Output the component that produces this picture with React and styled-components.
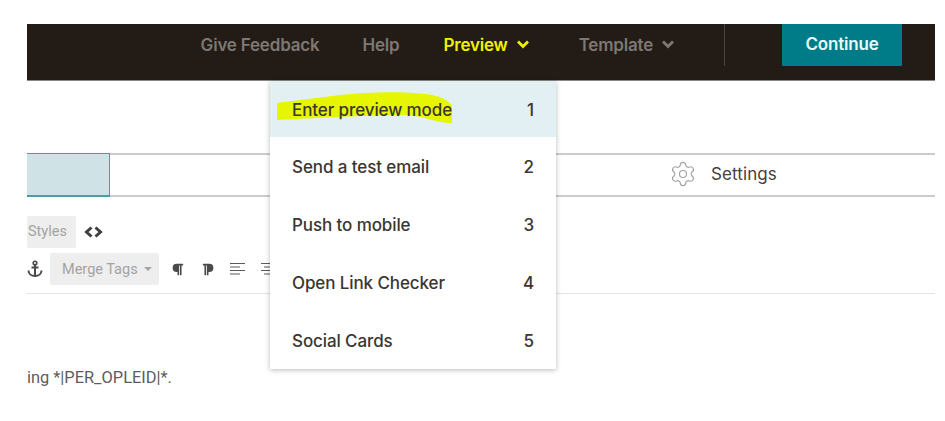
import React from "react";
import styled, { createGlobalStyle } from "styled-components";
import { Settings as GearIcon } from "lucide-react";
import { FaParagraph } from "react-icons/fa";

const GlobalStyle = createGlobalStyle`
  html, body {
    margin: 0;
    padding: 0;
    background: #fff;
  }
  body {
    font-family: "Inter", "Liberation Sans", sans-serif;
  }
`;

const Page = styled.div`
  position: relative;
  width: 945px;
  height: 421px;
  box-sizing: border-box;
  padding: 24px 10px 0 27px;
  overflow: hidden;
`;

const TopBar = styled.header`
  display: flex;
  justify-content: flex-end;
  align-items: flex-start;
  height: 56px;
  padding-right: 33px;
  background: #231b16;
  border-bottom: 1px solid #8a8886;
`;

const NavLink = styled.span`
  display: flex;
  align-items: center;
  height: 41px;
  margin-right: ${(p) => p.$gap}px;
  font-size: 17px;
  font-weight: 600;
  letter-spacing: -0.2px;
  color: ${(p) => (p.$active ? "#f2f200" : "#7d7874")};
`;

const Chevron = styled.svg`
  width: 14px;
  height: 9px;
  margin-left: ${(p) => p.$gap}px;
  fill: none;
  stroke: currentColor;
  stroke-width: 2.8;
`;

const Divider = styled.span`
  width: 1px;
  height: 42px;
  margin-right: 57px;
  background: #4a4541;
`;

const ContinueButton = styled.button`
  width: 120px;
  height: 42px;
  padding: 0 0 2px;
  border: 0;
  border-radius: 0 0 1px 1px;
  background: #007c89;
  color: #e8fbfb;
  font-family: inherit;
  font-size: 17px;
  font-weight: 600;
  letter-spacing: -0.2px;
`;

const TabRow = styled.div`
  display: flex;
  align-items: stretch;
  height: 40px;
  margin-top: 72px;
  border-top: 2px solid #cccccc;
  border-bottom: 2px solid #cccccc;
`;

const ActiveTab = styled.div`
  width: 82px;
  margin: -2px 0;
  background: #cfe3e6;
  border: solid #4f9ba3;
  border-width: 1px 1px 2px 0;
`;

const SettingsTab = styled.div`
  display: flex;
  align-items: center;
  margin-left: 559px;
  padding-bottom: 2px;
  gap: 14px;
  font-size: 17px;
  letter-spacing: 0.1px;
  color: #45403c;
  svg {
    color: #a3a3a3;
  }
`;

const ToolRow = styled.div`
  display: flex;
  align-items: center;
  height: 32px;
  margin-top: ${(p) => p.$top}px;
`;

const ToolButton = styled.div`
  display: flex;
  align-items: center;
  box-sizing: border-box;
  width: ${(p) => p.$width}px;
  height: 32px;
  margin-left: ${(p) => p.$left}px;
  padding-left: ${(p) => p.$pad}px;
  padding-bottom: ${(p) => p.$lift || 0}px;
  background: #eeeeee;
  border-radius: 2px;
  font-family: "Roboto", "Liberation Sans", sans-serif;
  font-size: 14.5px;
  color: #a3a3a3;
`;

const Caret = styled.span`
  margin-left: 6px;
  border-top: 4px solid #a3a3a3;
  border-left: 4px solid transparent;
  border-right: 4px solid transparent;
`;

const ToolIcon = styled.span`
  display: flex;
  align-items: center;
  margin-left: ${(p) => p.$left}px;
  color: #4a4a4a;
`;

const MirroredIcon = styled(ToolIcon)`
  svg {
    transform: scaleX(-1);
  }
`;

const EditorRule = styled.div`
  height: 1px;
  margin-top: 8px;
  background: #e4e4e4;
`;

const BodyText = styled.p`
  margin: 75px 0 0;
  font-family: "Roboto", "Liberation Sans", sans-serif;
  font-size: 16.4px;
  line-height: 18px;
  color: #5c5c5c;
`;

const Menu = styled.ul`
  position: absolute;
  top: 81px;
  left: 270px;
  width: 286px;
  margin: 0;
  padding: 0;
  list-style: none;
  background: #fff;
  box-shadow: 0 1px 5px rgba(0, 0, 0, 0.28);
`;

const MenuItem = styled.li`
  position: relative;
  display: flex;
  justify-content: space-between;
  align-items: center;
  height: ${(p) => (p.$selected ? 56 : 58)}px;
  box-sizing: border-box;
  padding: 2px 22px 0;
  background: ${(p) => (p.$selected ? "#e3f0f3" : "transparent")};
  font-size: 17px;
  font-weight: 450;
  letter-spacing: -0.1px;
  color: #3a3632;
`;

const MenuLabel = styled.span`
  position: relative;
`;

const Highlight = styled.svg`
  position: absolute;
  top: 11px;
  left: 6px;
  width: 177px;
  height: 32px;
`;

const items = ["Enter preview mode", "Send a test email", "Push to mobile", "Open Link Checker", "Social Cards"];

const ChevronDown = ({ gap }) => (
  <Chevron $gap={gap} viewBox="0 0 14 9">
    <path d="M2 1.5l5 5 5-5" />
  </Chevron>
);

const AlignLines = ({ center }) => (
  <svg width="16" height="14" viewBox="0 0 16 14" stroke="#5a5a5a" strokeWidth="1.2">
    <path d={center ? "M0 1.5h15M3 5h9M0 8.5h15M3 12h9" : "M0 1.5h15M0 5h10M0 8.5h15M0 12h10"} />
  </svg>
);

const AnchorIcon = () => (
  <svg width="16" height="18" viewBox="0 0 16 18" fill="none" stroke="#4a4a4a" strokeWidth="2">
    <circle cx="8" cy="3" r="1.8" strokeWidth="1.6" />
    <path d="M8 5v11M4.5 7.5h7M1.5 10.5c0 3.5 3 5.5 6.5 5.5s6.5-2 6.5-5.5" />
  </svg>
);

const App = () => {
  return (
    <Page>
      <GlobalStyle />
      <TopBar>
        <NavLink $gap={43}>Give Feedback</NavLink>
        <NavLink $gap={44}>Help</NavLink>
        <NavLink $gap={49} $active>
          Preview
          <ChevronDown gap={8} />
        </NavLink>
        <NavLink $gap={49}>
          Template
          <ChevronDown gap={8} />
        </NavLink>
        <Divider />
        <ContinueButton>Continue</ContinueButton>
      </TopBar>

      <TabRow>
        <ActiveTab />
        <SettingsTab>
          <GearIcon size={28} strokeWidth={1} />
          Settings
        </SettingsTab>
      </TabRow>

      <ToolRow $top={19}>
        <ToolButton $width={49} $left={0} $pad={1} $lift={2}>
          Styles
        </ToolButton>
        <ToolIcon $left={8}>
          <svg width="19" height="12" viewBox="0 0 19 12" fill="none" stroke="#3f3f3f" strokeWidth="3">
            <path d="M7.5 1.5L2.5 6l5 4.5M11.5 1.5l5 4.5-5 4.5" />
          </svg>
        </ToolIcon>
      </ToolRow>

      <ToolRow $top={5}>
        <ToolIcon $left={0}>
          <AnchorIcon />
        </ToolIcon>
        <ToolButton $width={109} $left={7} $pad={12}>
          Merge Tags
          <Caret />
        </ToolButton>
        <ToolIcon $left={12}>
          <FaParagraph size={13} />
        </ToolIcon>
        <MirroredIcon $left={18}>
          <FaParagraph size={13} />
        </MirroredIcon>
        <ToolIcon $left={15}>
          <AlignLines />
        </ToolIcon>
        <ToolIcon $left={15}>
          <AlignLines center />
        </ToolIcon>
      </ToolRow>

      <EditorRule />
      <BodyText>ing *|PER_OPLEID|*.</BodyText>

      <Menu>
        {items.map((label, i) => (
          <MenuItem key={label} $selected={i === 0}>
            {i === 0 && (
              <Highlight viewBox="0 0 177 32">
                <path
                  d="M1 11C20 8 45 6 64 3C90 0 125 -1 150 2C165 4 172 8 176 14L176 31C160 31 148 24 131 23C95 23 40 26 1 28Z"
                  fill="#e6f500"
                />
              </Highlight>
            )}
            <MenuLabel>{label}</MenuLabel>
            <MenuLabel>{i + 1}</MenuLabel>
          </MenuItem>
        ))}
      </Menu>
    </Page>
  );
};

export default App;
